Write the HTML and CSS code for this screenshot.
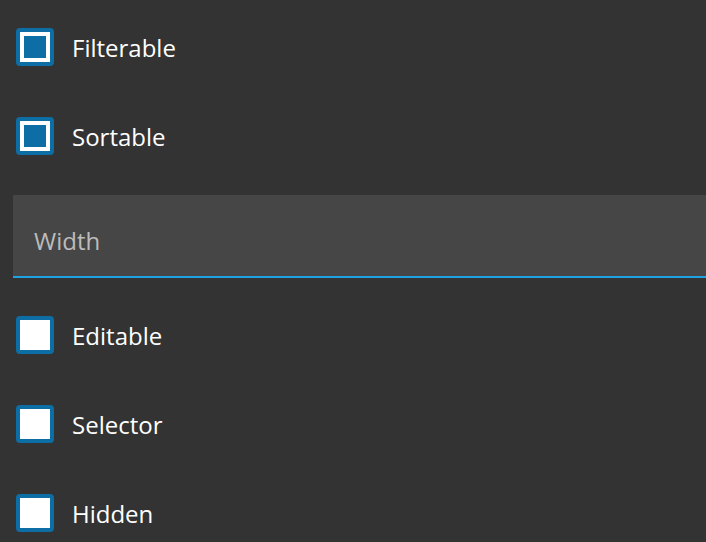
FILE: index.html
```html
<!DOCTYPE html>
<html>
<head>
<meta charset="utf-8">
<link rel="stylesheet" href="styles.css">
</head>
<body>
<div class="panel">
  <label class="row"><span class="box checked"></span><span class="label">Filterable</span></label>
  <label class="row"><span class="box checked"></span><span class="label">Sortable</span></label>
  <div class="field"><span class="placeholder">Width</span></div>
  <div class="after">
    <label class="row"><span class="box"></span><span class="label">Editable</span></label>
    <label class="row"><span class="box"></span><span class="label">Selector</span></label>
    <label class="row"><span class="box"></span><span class="label">Hidden</span></label>
  </div>
</div>
</body>
</html>
```
FILE: styles.css
```css
html, body {
  margin: 0;
  padding: 0;
  background: #333333;
  overflow: hidden;
}
body {
  font-family: "Open Sans", "Noto Sans", sans-serif;
  color: #ffffff;
}
.panel {
  padding-top: 2px;
  display: flex;
  flex-direction: column;
}
.row {
  height: 89px;
  display: flex;
  align-items: center;
  padding-left: 16px;
}
.box {
  box-sizing: border-box;
  width: 38px;
  height: 38px;
  border: 4px solid #0d6ea6;
  border-radius: 4px;
  background: #ffffff;
  flex: none;
}
.box.checked {
  background: #0d6ea6;
  box-shadow: inset 0 0 0 4px #ffffff;
}
.label {
  margin-left: 18px;
  padding-top: 2px;
  font-size: 24px;
}
.field {
  margin-top: 15px;
  margin-left: 13px;
  height: 72px;
  padding-top: 9px;
  padding-left: 21px;
  background: #464646;
  border-bottom: 2px solid #1fa3e3;
  display: flex;
  align-items: center;
}
.placeholder {
  font-size: 24px;
  color: #bcbcbc;
}
.after {
  margin-top: 12px;
  display: flex;
  flex-direction: column;
}
```
